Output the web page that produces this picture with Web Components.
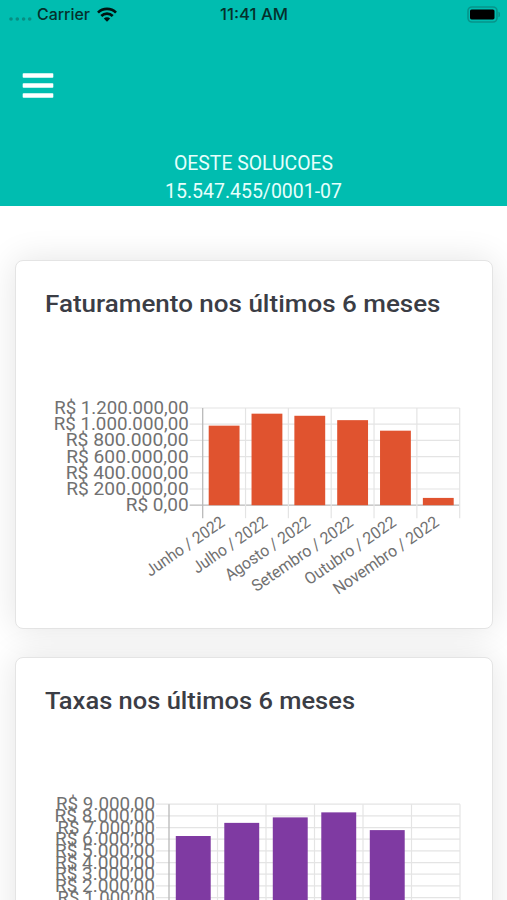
<!DOCTYPE html>
<html lang="pt-BR">
<head>
<meta charset="utf-8">
<meta name="viewport" content="width=device-width, initial-scale=1">
<title>Dashboard</title>
<style>
    html,
    body {
        margin: 0;
        height: 100%;
        overflow: hidden;
        background: #fff;
    }
</style>
</head>
<body>
<dashboard-page></dashboard-page>

<script>
const createTemplate = html => {
    const template = document.createElement('template');
    template.innerHTML = html;
    return template;
};

// shared base: clones the template of the class into an open shadow root
class BaseElement extends HTMLElement {
    constructor() {
        super();
        this.rootNode = this.attachShadow({ mode: 'open' });
        this.rootNode.appendChild(this.constructor.template.content.cloneNode(true));
    }
}

// one line of text set to a fixed width
class FittedText extends BaseElement {
    connectedCallback() {
        const width = this.getAttribute('width');
        const height = this.getAttribute('height');
        const svg = this.rootNode.querySelector('svg');
        const text = this.rootNode.querySelector('text');

        svg.setAttribute('width', width);
        svg.setAttribute('height', height);
        text.setAttribute('y', this.getAttribute('baseline'));
        text.setAttribute('textLength', width);
        text.textContent = this.getAttribute('label');
    }
}

FittedText.template = createTemplate(`
    <style>
        :host { display: block; }
        svg { display: block; overflow: visible; }
    </style>
    <svg><text x="0" fill="currentColor" lengthAdjust="spacingAndGlyphs"></text></svg>
`);
customElements.define('fitted-text', FittedText);

class StatusBar extends BaseElement {}

StatusBar.template = createTemplate(`
    <style>
        :host {
            display: grid;
            grid-template-columns: 1fr auto 1fr;
            align-items: center;
            height: 28px;
            padding: 0 7px 0 9px;
            color: #05302c;
            font: 500 16px Inter, sans-serif;
        }

        svg { display: block; }

        .network { display: flex; align-items: center; }
        .dots { margin: 9px 5px 0 0; }
        .wifi { margin-left: 7px; }
        .time { margin-right: 2px; }
        .battery { justify-self: end; }
    </style>
    <div class="network">
        <svg class="dots" width="23" height="4" fill="#078d82">
            <circle cx="2" cy="2" r="1.8"/><circle cx="8.3" cy="2" r="1.8"/>
            <circle cx="14.6" cy="2" r="1.8"/><circle cx="20.7" cy="2" r="1.8"/>
        </svg>
        <fitted-text label="Carrier" width="53" height="20" baseline="16"></fitted-text>
        <svg class="wifi" width="20" height="15" viewBox="0 0 20 15" fill="none" stroke="#001412" stroke-width="2.7">
            <path d="M1 5.6a12.8 12.8 0 0 1 18 0"/>
            <path d="M4.3 9a8.1 8.1 0 0 1 11.4 0"/>
            <path d="M10 14.8 6.8 11.5a4.6 4.6 0 0 1 6.4 0z" fill="#001412" stroke="none"/>
        </svg>
    </div>
    <fitted-text class="time" label="11:41 AM" width="68" height="20" baseline="16"></fitted-text>
    <svg class="battery" width="33" height="17">
        <rect x="1" y="1" width="29" height="15" rx="4" fill="none" stroke="#07948a" stroke-width="1.6"/>
        <path d="M31.4 5.8q2 .9 2 2.7t-2 2.7z" fill="#07948a"/>
        <rect x="3" y="3.4" width="24.5" height="10" rx="1.6" fill="#000"/>
    </svg>
`);
customElements.define('status-bar', StatusBar);

class PageHeader extends BaseElement {}

PageHeader.template = createTemplate(`
    <style>
        :host {
            display: flex;
            flex-direction: column;
            box-sizing: border-box;
            height: 206px;
            background: #00bdb0;
            color: #e6fffc;
            font: 400 20px Roboto, sans-serif;
        }

        button {
            display: block;
            margin: 44px 0 0 22px;
            padding: 0;
            border: 0;
            background: none;
            width: 32px;
            height: 28px;
        }

        .company {
            display: flex;
            flex-direction: column;
            align-items: center;
            margin-top: 49px;
        }
    </style>
    <status-bar></status-bar>
    <button aria-label="Menu">
        <svg width="32" height="28" fill="#fff">
            <rect x=".7" y="1.2" width="30.6" height="4.6" rx=".8"/>
            <rect x=".7" y="11.2" width="30.6" height="4.6" rx=".8"/>
            <rect x=".7" y="21.2" width="30.6" height="4.6" rx=".8"/>
        </svg>
    </button>
    <div class="company">
        <slot></slot>
    </div>
`);
customElements.define('page-header', PageHeader);

class ChartCard extends BaseElement {}

ChartCard.template = createTemplate(`
    <style>
        :host {
            display: block;
            box-sizing: border-box;
            height: 369px;
            border: 1px solid #e4e4e4;
            border-radius: 8px;
            background: #fff;
            box-shadow: 0 0 34px rgba(0, 0, 0, .11);
            color: #3b3d45;
            font: 500 24.5px Roboto, sans-serif;
        }

        .title { display: block; padding: 26px 0 0 29px; }
    </style>
    <div class="title"><slot name="title"></slot></div>
    <slot></slot>
`);
customElements.define('chart-card', ChartCard);

// bar chart with one gridline per tick, labels on the left and slanted below
class BarChart extends BaseElement {
    connectedCallback() {
        this.render(JSON.parse(this.getAttribute('config')));
    }

    render({ left, right, top, step, ticks, tickWidths, max, labelOffset, bars, color }) {
        const bottom = top + step * (ticks.length - 1);
        const column = (right - left) / bars.length;
        const inset = column * 0.14;
        const parts = [];

        const line = (x1, y1, x2, y2, cls) =>
            parts.push(`<line class="${cls}" x1="${x1}" y1="${y1}" x2="${x2}" y2="${y2}"/>`);

        ticks.forEach((tick, i) => {
            const y = top + i * step;
            line(left - 13, y, right, y, i === ticks.length - 1 ? 'axis' : 'grid');
            parts.push(`<text x="${left - labelOffset - tickWidths[i]}" y="${y + 6}"
                textLength="${tickWidths[i]}" lengthAdjust="spacingAndGlyphs">${tick}</text>`);
        });

        for (let i = 0; i <= bars.length; i++) {
            const x = left + i * column;
            line(x, top, x, bottom + 13, i === 0 ? 'axis' : 'grid');
        }

        bars.forEach(({ label, value, width }, i) => {
            const height = value / max * (bottom - top);
            const x = left + i * column;
            const endX = x + column / 2 + 1.8;
            parts.push(`<rect x="${x + inset}" y="${bottom - height}" width="${column - inset * 2}"
                height="${height}" fill="${color}"/>`);
            parts.push(`<text class="month" transform="translate(${endX} ${bottom + 19.5}) rotate(-34.6)"
                x="${-width}" textLength="${width}" lengthAdjust="spacingAndGlyphs">${label}</text>`);
        });

        this.rootNode.querySelector('svg').innerHTML = parts.join('');
    }
}

BarChart.template = createTemplate(`
    <style>
        :host { display: block; }
        svg { display: block; }
        text { font: 400 17.5px Roboto, sans-serif; fill: #717171; }
        .month { font-size: 16.5px; }
        .grid { stroke: #e4e4e4; stroke-width: 1.2; }
        .axis { stroke: #b9b9b9; stroke-width: 1.3; }
    </style>
    <svg width="476" height="300"></svg>
`);
customElements.define('bar-chart', BarChart);

const months = [
    { label: 'Junho / 2022', width: 92 },
    { label: 'Julho / 2022', width: 87 },
    { label: 'Agosto / 2022', width: 99.5 },
    { label: 'Setembro / 2022', width: 119 },
    { label: 'Outubro / 2022', width: 107 },
    { label: 'Novembro / 2022', width: 124 }
];

const withValues = values => months.map((month, i) => ({ ...month, value: values[i] }));

const revenue = {
    left: 186.7,
    right: 443.7,
    top: 79,
    step: 16.2,
    max: 1200000,
    labelOffset: 14,
    color: '#e0532f',
    ticks: ['R$ 1.200.000,00', 'R$ 1.000.000,00', 'R$ 800.000,00', 'R$ 600.000,00', 'R$ 400.000,00', 'R$ 200.000,00', 'R$ 0,00'],
    tickWidths: [134.5, 135, 123, 122.5, 123, 122.5, 63],
    bars: withValues([982000, 1130000, 1104000, 1050000, 920000, 90000])
};

const fees = {
    left: 153,
    right: 444,
    top: 78.2,
    step: 11.67,
    max: 9000,
    labelOffset: 14,
    color: '#7f3aa2',
    ticks: ['R$ 9.000,00', 'R$ 8.000,00', 'R$ 7.000,00', 'R$ 6.000,00', 'R$ 5.000,00', 'R$ 4.000,00', 'R$ 3.000,00', 'R$ 2.000,00', 'R$ 1.000,00', 'R$ 0,00'],
    tickWidths: [99, 100.5, 97.5, 100, 100, 100, 100, 100, 97.5, 63],
    bars: withValues([6274, 7400, 7870, 8300, 6780, 0])
};

class DashboardPage extends BaseElement {}

DashboardPage.template = createTemplate(`
    <style>
        :host {
            display: block;
            width: 507px;
            height: 900px;
            overflow: hidden;
        }

        main {
            display: flex;
            flex-direction: column;
            gap: 28px;
            padding: 54px 14px 0 15px;
        }
    </style>
    <page-header>
        <fitted-text label="OESTE SOLUCOES" width="159" height="28" baseline="21"></fitted-text>
        <fitted-text label="15.547.455/0001-07" width="177" height="28" baseline="21"></fitted-text>
    </page-header>
    <main>
        <chart-card>
            <fitted-text slot="title" label="Faturamento nos últimos 6 meses" width="395.5" height="42" baseline="25"></fitted-text>
            <bar-chart config='${JSON.stringify(revenue)}'></bar-chart>
        </chart-card>
        <chart-card>
            <fitted-text slot="title" label="Taxas nos últimos 6 meses" width="310" height="42" baseline="25"></fitted-text>
            <bar-chart config='${JSON.stringify(fees)}'></bar-chart>
        </chart-card>
    </main>
`);
customElements.define('dashboard-page', DashboardPage);
</script>
</body>
</html>
